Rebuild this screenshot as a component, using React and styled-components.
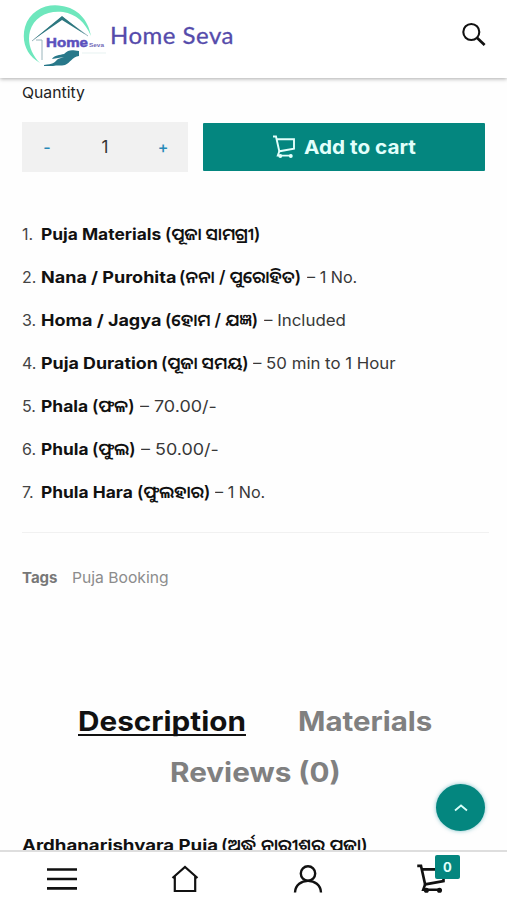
import React, { useState } from "react";
import styled, { createGlobalStyle } from "styled-components";

const details = [
  {
    name: "Puja Materials",
    local: "(ପୂଜା ସାମଗ୍ରୀ)",
    nameW: 124,
    localW: 102,
    nameScale: 1.085,
  },
  {
    name: "Nana / Purohita",
    local: "(ନନା / ପୁରୋହିତ)",
    info: "– 1 No.",
    nameW: 138,
    localW: 128,
    nameScale: 1.125,
    infoScale: 1.01,
  },
  {
    name: "Homa / Jagya",
    local: "(ହୋମ / ଯଜ୍ଞ)",
    info: "– Included",
    nameW: 124,
    localW: 99,
    nameScale: 1.125,
    infoScale: 1.055,
  },
  {
    name: "Puja Duration",
    local: "(ପୂଜା ସମୟ)",
    info: "– 50 min to 1 Hour",
    nameW: 120,
    localW: 92,
    nameScale: 1.115,
    infoScale: 1.05,
  },
  {
    name: "Phala",
    local: "(ଫଳ)",
    info: "– 70.00/-",
    nameW: 51,
    localW: 48,
    nameScale: 1.09,
    infoScale: 1.12,
  },
  {
    name: "Phula",
    local: "(ଫୁଲ)",
    info: "– 50.00/-",
    nameW: 51,
    localW: 49,
    nameScale: 1.08,
    infoScale: 1.12,
  },
  {
    name: "Phula Hara",
    local: "(ଫୁଲହାର)",
    info: "– 1 No.",
    nameW: 96,
    localW: 78,
    nameScale: 1.085,
    infoScale: 1.01,
  },
];

const Logo = () => (
  <svg width="84" height="68" viewBox="0 0 84 68" fill="none">
    <path
      d="M18 61C5 54-1 40 3 25C8 8 25 1 40 4C55 6 66 17 69 34C63 20 54 12 41 10C26 8 12 15 8 29C5 40 9 52 18 61Z"
      fill="#6ee7bd"
    />
    <path d="M10 39L40 15L66 34M14 38H20V58" stroke="#9ab5bc" strokeWidth="1" />
    <path d="M11 38L40 14L64 33L40 18Z" fill="#2d7880" />
    <text
      x="24"
      y="45"
      textLength="42"
      lengthAdjust="spacingAndGlyphs"
      fontFamily="Liberation Sans"
      fontSize="13.5"
      fontWeight="700"
      fill="#5b50bd"
      stroke="#5b50bd"
      strokeWidth=".5"
    >
      Home
    </text>
    <text
      x="67"
      y="45"
      textLength="15"
      lengthAdjust="spacingAndGlyphs"
      fontFamily="Liberation Sans"
      fontSize="6"
      fontWeight="700"
      fill="#716ab8"
    >
      Seva
    </text>
    <path
      d="M22 63C31 62 32 61 36 57L42 55L30 57C32 53 38 53 42 52C47 47 50 48 57 49V54C50 55 48 61 43 63C39 64 35 63 31 64H22Z"
      fill="#28788a"
    />
    <path d="M60 51H84" stroke="#dceceb" strokeWidth=".7" />
  </svg>
);

const CartIcon = ({ size, weight }) => (
  <svg
    width={size}
    height={size}
    viewBox="0 0 24 24"
    fill="none"
    stroke="currentColor"
    strokeWidth={weight}
  >
    <path d="M1 1.5H4L7.3 16.3L22 13.7V4.3H4.7" />
    <path d="M7.3 16.3L5.8 20.6H20" />
    <circle cx="8.3" cy="21" r="1" />
    <circle cx="18.8" cy="21" r="1" />
  </svg>
);

const App = () => {
  const [count, setCount] = useState(1);

  return (
    <Screen>
      <GlobalStyle />
      <Header>
        <Brand>
          <Logo />
          <BrandName>Home Seva</BrandName>
        </Brand>
        <IconButton aria-label="Search">
          <svg width="26" height="26" viewBox="0 0 26 26" fill="none" stroke="#111">
            <circle cx="10.3" cy="10" r="8" strokeWidth="2.1" />
            <path d="M16 15.7L23.6 23" strokeWidth="2.7" />
          </svg>
        </IconButton>
      </Header>

      <Content>
        <Label>
          <Stretch $scale={1.05}>Quantity</Stretch>
        </Label>
        <BuyRow>
          <Stepper>
            <StepButton onClick={() => setCount(Math.max(1, count - 1))}>-</StepButton>
            <span>{count}</span>
            <StepButton onClick={() => setCount(count + 1)}>+</StepButton>
          </Stepper>
          <AddButton>
            <CartIcon size={24} weight={1.9} />
            <AddText>
              <Stretch $scale={1.09}>Add to cart</Stretch>
            </AddText>
          </AddButton>
        </BuyRow>

        <DetailList>
          {details.map((item, i) => (
            <DetailRow key={item.name}>
              <Index>{i + 1}.</Index>
              <Bold $w={item.nameW}>
                <Stretch $scale={item.nameScale}>{item.name}</Stretch>
              </Bold>
              <Bold $w={item.localW} $local>
                {item.local}
              </Bold>
              {item.info && (
                <Info>
                  <Stretch $scale={item.infoScale}>{item.info}</Stretch>
                </Info>
              )}
            </DetailRow>
          ))}
        </DetailList>

        <Tags>
          <strong>Tags</strong>
          <Stretch $scale={1.045}>Puja Booking</Stretch>
        </Tags>

        <Tabs>
          <Tab $active $w={166}>
            <Stretch $scale={1.1}>Description</Stretch>
          </Tab>
          <Tab $w={132}>
            <Stretch $scale={1.09}>Materials</Stretch>
          </Tab>
          <Tab $w={168}>
            <Stretch $scale={1.1}>Reviews (0)</Stretch>
          </Tab>
        </Tabs>

        <Heading>
          <Bold $w={199}>
            <Stretch $scale={1.165}>Ardhanarishvara Puja</Stretch>
          </Bold>
          <Bold $w={150} $local>
            <Stretch $scale={1.045}>(ଅର୍ଦ୍ଧ ନାରୀଶ୍ଵର ପୂଜା)</Stretch>
          </Bold>
        </Heading>
      </Content>

      <TopButton aria-label="Back to top">
        <svg width="16" height="10" viewBox="0 0 16 10" fill="none" stroke="#d9fffa">
          <path d="M2 7.5L8 2.5L14 7.5" strokeWidth="1.8" />
        </svg>
      </TopButton>

      <BottomNav>
        <NavItem>
          <svg width="30" height="24" viewBox="0 0 30 24" stroke="#111" strokeWidth="2.7">
            <path d="M0 2.5H30M0 12H30M0 21.3H30" />
          </svg>
        </NavItem>
        <NavItem>
          <svg
            width="28"
            height="28"
            viewBox="0 0 28 28"
            fill="none"
            stroke="#111"
            strokeWidth="2.2"
          >
            <path d="M1.5 13L14 2L26.5 13M3.8 11V26H24.2V11" />
          </svg>
        </NavItem>
        <NavItem>
          <svg
            width="30"
            height="28"
            viewBox="0 0 30 28"
            fill="none"
            stroke="#111"
            strokeWidth="2.4"
          >
            <circle cx="15" cy="8.5" r="7.2" />
            <path d="M2 27.5C2.5 12 27.5 12 28 27.5" />
          </svg>
        </NavItem>
        <NavItem>
          <CartIcon size={30} weight={2.1} />
          <Badge>0</Badge>
        </NavItem>
      </BottomNav>
    </Screen>
  );
};

export default App;

const GlobalStyle = createGlobalStyle`
  * {
    box-sizing: border-box;
  }

  body {
    margin: 0;
    background: #fefefe;
    font-family: Inter, "Noto Sans Oriya", "Noto Sans", sans-serif;
    color: #111;
  }

  button {
    border: 0;
    padding: 0;
    background: none;
    font: inherit;
    color: inherit;
  }
`;

const Screen = styled.div`
  position: relative;
  display: flex;
  flex-direction: column;
  height: 900px;
  overflow: hidden;
`;

const Header = styled.header`
  display: flex;
  flex: none;
  align-items: center;
  justify-content: space-between;
  height: 78px;
  padding: 0 20px 6px 22px;
  background: #fff;
  box-shadow: 0 1px 4px rgba(0, 0, 0, 0.32);
  z-index: 1;
`;

const Brand = styled.div`
  display: flex;
  align-items: center;
  gap: 4px;
`;

const BrandName = styled.span`
  margin-bottom: 4px;
  font-family: Lato, sans-serif;
  font-size: 24px;
  letter-spacing: 0.5px;
  color: #554bab;
  -webkit-text-stroke: 0.3px #554bab;
`;

const IconButton = styled.button`
  display: flex;
  margin-bottom: 3px;
`;

const Content = styled.main`
  flex: 1;
  min-height: 0;
  padding: 3px 18px 0 22px;
  overflow: hidden;
`;

// widens the letters without changing their height
const Stretch = styled.span`
  display: inline-block;
  white-space: nowrap;
  transform: scaleX(${({ $scale }) => $scale || 1});
  transform-origin: left center;
`;

const Label = styled.div`
  height: 23px;
  line-height: 23px;
  font-size: 15px;
  color: #222;
`;

const BuyRow = styled.div`
  display: flex;
  gap: 15px;
  margin-top: 18px;
`;

const Stepper = styled.div`
  display: flex;
  align-items: center;
  justify-content: space-between;
  width: 166px;
  height: 50px;
  padding: 0 19px;
  background: #f1f1f1;
  color: #333;
  font-size: 17px;
`;

const StepButton = styled.button`
  width: 12px;
  color: #2689b8;
  font-size: 16px;
  font-weight: 500;
`;

const AddButton = styled.button`
  display: flex;
  align-items: center;
  justify-content: center;
  gap: 8px;
  width: 282px;
  height: 48px;
  margin-top: 1px;
  border-radius: 1px;
  background: #04867f;
  color: #e2fffb;
  font-size: 19px;
  font-weight: 650;

  svg {
    margin-bottom: 1px;
  }
`;

const AddText = styled.span`
  width: 112px;
  text-align: left;
`;

const DetailList = styled.div`
  margin-top: 40px;
  padding-bottom: 19px;
  border-bottom: 1px solid #f1f1f1;
`;

const DetailRow = styled.div`
  display: flex;
  height: 43px;
  line-height: 44px;
  font-size: 16px;
  white-space: nowrap;
`;

const Index = styled.span`
  width: 19px;
  color: #444;
`;

const Bold = styled.strong`
  flex: none;
  width: ${({ $w }) => $w}px;
  font-size: ${({ $local }) => ($local ? 17 : 16)}px;
  font-weight: ${({ $local }) => ($local ? 600 : 680)};
`;

const Info = styled.span`
  color: #383838;
`;

const Tags = styled.div`
  display: flex;
  gap: 14px;
  margin-top: 32px;
  height: 24px;
  line-height: 25px;
  font-size: 15px;
  color: #8c8c8c;

  strong {
    color: #777;
  }
`;

const Tabs = styled.div`
  display: flex;
  flex-wrap: wrap;
  justify-content: center;
  column-gap: 54px;
  margin: 107px 4px 0 0;
`;

const Tab = styled.button`
  width: ${({ $w }) => $w}px;
  height: 51px;
  text-align: left;
  font-size: 27px;
  font-weight: 650;
  color: ${({ $active }) => ($active ? "#111" : "#808080")};

  span {
    text-decoration: ${({ $active }) => ($active ? "underline" : "none")};
    text-decoration-thickness: 2px;
    text-underline-offset: 3px;
    text-decoration-skip-ink: none;
  }
`;

const Heading = styled.div`
  display: flex;
  margin-top: 35px;
  line-height: 24px;
  white-space: nowrap;
`;

const TopButton = styled.button`
  position: absolute;
  right: 22px;
  bottom: 69px;
  display: flex;
  align-items: center;
  justify-content: center;
  width: 49px;
  height: 47px;
  border-radius: 50%;
  background: #04867f;
  box-shadow: 0 0 4px rgba(4, 134, 150, 0.5);
`;

const BottomNav = styled.nav`
  display: grid;
  grid-template-columns: repeat(4, 123px);
  flex: none;
  height: 50px;
  border-top: 2px solid #dedede;
  background: #fff;
  z-index: 1;
`;

const NavItem = styled.div`
  position: relative;
  display: flex;
  align-items: center;
  justify-content: center;
  padding-top: 6px;
`;

const Badge = styled.span`
  position: absolute;
  top: 3px;
  left: 66px;
  width: 25px;
  height: 24px;
  border-radius: 2px;
  background: #04867f;
  color: #e2fffb;
  font-size: 13px;
  font-weight: 700;
  line-height: 24px;
  text-align: center;
`;
